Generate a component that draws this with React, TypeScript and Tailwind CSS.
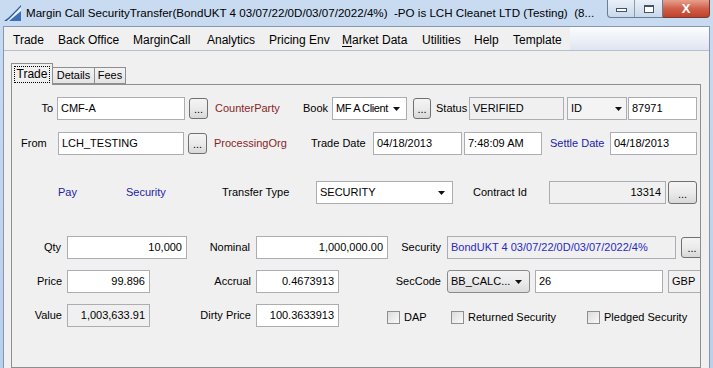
import React from "react";

const font = "font-['Liberation_Sans',Arial,sans-serif]";

function Arrow() {
  return (
    <svg width="7" height="4" viewBox="0 0 7 4" className="shrink-0">
      <path d="M0 0h7L3.5 4z" fill="#111" />
    </svg>
  );
}

function Input({
  className = "",
  children,
  right = false,
  gray = false,
}: {
  className?: string;
  children?: React.ReactNode;
  right?: boolean;
  gray?: boolean;
}) {
  return (
    <div
      className={
        "h-[23px] shrink-0 flex items-center border border-[#abadb3] text-[11px] whitespace-nowrap overflow-hidden " +
        (right ? "justify-end pr-[4px] " : "pl-[3px] ") +
        (gray ? "bg-[#f0f0f0] " : "bg-white ") +
        className
      }
    >
      {children}
    </div>
  );
}

function Dots({ className = "" }: { className?: string }) {
  return (
    <div
      className={
        "shrink-0 flex items-end justify-center pb-[3px] rounded-[3px] border border-[#707070] bg-gradient-to-b from-[#f4f4f4] via-[#ebebeb] to-[#d8d8d8] text-[11px] leading-none " +
        className
      }
    >
      ...
    </div>
  );
}

function Label({ className = "", children }: { className?: string; children: React.ReactNode }) {
  return <div className={"shrink-0 text-[11px] whitespace-nowrap " + className}>{children}</div>;
}

function Check({ className = "", label }: { className?: string; label: string }) {
  return (
    <div className={"shrink-0 flex items-center gap-[4px] text-[11px] " + className}>
      <div className="w-[13px] h-[13px] border border-[#8e8f8f] bg-gradient-to-br from-[#dcdcdc] to-[#fafafa]" />
      <span>{label}</span>
    </div>
  );
}

function TitleBar() {
  return (
    <div className="h-[26px] flex items-start shrink-0">
      <svg width="18" height="18" viewBox="0 0 18 18" className="ml-[4px] mt-[4px] shrink-0">
        <path d="M0 17 C6 13 11 7 17 1 L17 3 C12 8 7 14 3 17 Z" fill="#2a5aa8" />
        <path d="M3 17 C7 14 12 8 17 3 L17 17 Z" fill="#e8f0fa" />
        <path d="M5 17 C9 14 13 10 17 7 L17 17 Z" fill="#3d6fb8" />
      </svg>
      <div className="ml-[4px] mt-[5px] text-[11.6px] leading-[15px] whitespace-pre text-black w-[582px] overflow-hidden">
        {"Margin Call SecurityTransfer(BondUKT 4 03/07/22/0D/03/07/2022/4%)  -PO is LCH Cleanet LTD (Testing)  (8..."}
      </div>
      <div className="ml-auto mr-[3px] flex">
        <div className="flex h-[18px] border border-t-0 border-[#6a7d96] rounded-bl-[4px] bg-gradient-to-b from-[#e9f0f8] to-[#c9d8ea]">
          <div className="w-[27px] flex items-center justify-center border-r border-[#8a9bb2]">
            <div className="w-[11px] h-[4px] mt-[3px] border border-[#44536a] bg-white" />
          </div>
          <div className="w-[27px] flex items-center justify-center">
            <div className="w-[10px] h-[8px] border border-[#44536a] border-t-2 bg-white" />
          </div>
        </div>
        <div className="w-[47px] h-[18px] flex items-center justify-center border border-t-0 border-l-0 border-[#7a3a30] rounded-br-[4px] bg-gradient-to-b from-[#e6a08e] via-[#d0604a] to-[#c0402a]">
          <span className="text-white font-bold text-[13px] leading-none">X</span>
        </div>
      </div>
    </div>
  );
}

const menus: [string, string][] = [
  ["Trade", "w-[45px]"],
  ["Back Office", "w-[75px]"],
  ["MarginCall", "w-[74px]"],
  ["Analytics", "w-[62px]"],
  ["Pricing Env", "w-[73px]"],
  ["Market Data", "w-[80px]"],
  ["Utilities", "w-[52px]"],
  ["Help", "w-[39px]"],
  ["Template", "w-[57px]"],
];

function MenuBar() {
  return (
    <div className="h-[24px] shrink-0 flex border-b border-[#b6bfcc] bg-gradient-to-b from-[#fbfcfe] to-[#dfe6f2]">
      <div className="flex items-center pl-[9px] pt-[2px] bg-[#f0f0f0] text-[12px]">
        {menus.map(([m, w]) => (
          <div key={m} className={"shrink-0 whitespace-nowrap " + w}>
            {m === "Market Data" ? (
              <>
                <span className="underline underline-offset-2">M</span>arket Data
              </>
            ) : (
              m
            )}
          </div>
        ))}
      </div>
    </div>
  );
}

function Tabs() {
  return (
    <div className="mt-[12px] ml-[7px] flex items-end h-[21px] shrink-0">
      <div className="relative z-10 w-[42px] h-[22px] -mb-[1px] border border-b-0 border-[#8e8e8e] bg-[#f0f0f0] flex items-start justify-center pt-[2px]">
        <div className="border border-dotted border-black px-[2px] text-[12px] leading-[15px]">Trade</div>
      </div>
      <div className="w-[42px] h-[17px] border border-l-0 border-[#8e8e8e] bg-gradient-to-b from-[#f2f2f2] to-[#e4e4e4] flex items-center justify-center text-[11px]">
        Details
      </div>
      <div className="w-[31px] h-[17px] border border-l-0 border-[#8e8e8e] bg-gradient-to-b from-[#f2f2f2] to-[#e4e4e4] flex items-center justify-center text-[11px]">
        Fees
      </div>
    </div>
  );
}

function Panel() {
  return (
    <div className="ml-[7px] w-[690px] flex-1 border border-[#8e8e8e] overflow-hidden">
      {/* row 1 */}
      <div className="mt-[12px] flex items-center h-[23px]">
        <Label className="w-[45px] text-right pr-[4px]">To</Label>
        <Input className="w-[128px]">CMF-A</Input>
        <Dots className="ml-[4px] w-[19px] h-[21px]" />
        <Label className="w-[95px] pl-[7px] text-[#8a1f1f]">CounterParty</Label>
        <Label className="w-[29px]">Book</Label>
        <Input className="w-[75px] pr-[6px] justify-between">
          <span className="tracking-[-0.4px]">MF A Client</span>
          <Arrow />
        </Input>
        <Dots className="ml-[6px] w-[18px] h-[21px]" />
        <Label className="w-[38px] pl-[5px]">Status</Label>
        <Input gray className="w-[95px]">VERIFIED</Input>
        <Input className="ml-[3px] w-[60px] pr-[4px] justify-between !bg-[#f4f4f4]">
          <span>ID</span>
          <Arrow />
        </Input>
        <Input className="ml-[1px] w-[69px]">87971</Input>
      </div>
      {/* row 2 */}
      <div className="mt-[12px] flex items-center h-[23px]">
        <Label className="w-[46px] pl-[9px]">From</Label>
        <Input className="w-[126px]">LCH_TESTING</Input>
        <Dots className="ml-[4px] w-[19px] h-[21px]" />
        <Label className="w-[104px] pl-[7px] text-[#8a1f1f]">ProcessingOrg</Label>
        <Label className="w-[62px]">Trade Date</Label>
        <Input className="w-[89px]">04/18/2013</Input>
        <Input className="ml-[2px] w-[78px]">7:48:09 AM</Input>
        <Label className="w-[68px] pl-[8px] text-[#2323a8]">Settle Date</Label>
        <Input className="w-[87px]">04/18/2013</Input>
      </div>
      {/* row 3 */}
      <div className="mt-[26px] flex items-center h-[23px]">
        <Label className="w-[114px] pl-[46px] text-[#2323a8]">Pay</Label>
        <Label className="w-[96px] text-[#2323a8]">Security</Label>
        <Label className="w-[94px]">Transfer Type</Label>
        <Input className="w-[137px] pr-[7px] justify-between">
          <span>SECURITY</span>
          <Arrow />
        </Input>
        <Label className="w-[96px] pl-[20px]">Contract Id</Label>
        <Input gray right className="w-[117px]">13314</Input>
        <Dots className="ml-[2px] w-[29px] h-[23px]" />
      </div>
      {/* row 4 */}
      <div className="mt-[32px] flex items-center h-[23px]">
        <Label className="w-[55px] text-right pr-[6px]">Qty</Label>
        <Input right className="w-[120px]">10,000</Input>
        <Label className="w-[69px] text-right pr-[6px]">Nominal</Label>
        <Input right className="w-[132px]">1,000,000.00</Input>
        <Label className="w-[59px] text-right pr-[6px]">Security</Label>
        <Input gray className="w-[229px] text-[#2a2ac0]">BondUKT 4 03/07/22/0D/03/07/2022/4%</Input>
        <Dots className="ml-[5px] w-[22px] h-[21px]" />
      </div>
      {/* row 5 */}
      <div className="mt-[11px] flex items-center h-[23px]">
        <Label className="w-[55px] text-right pr-[5px]">Price</Label>
        <Input right className="w-[83px]">99.896</Input>
        <Label className="w-[106px] text-right pr-[5px]">Accrual</Label>
        <Input right className="w-[83px]">0.4673913</Input>
        <Label className="w-[108px] text-right pr-[6px]">SecCode</Label>
        <div className="w-[83px] h-[23px] shrink-0 flex items-center justify-between pl-[3px] pr-[7px] rounded-[3px] border border-[#8a8a8a] bg-gradient-to-b from-[#f3f3f3] via-[#ebebeb] to-[#dcdcdc] text-[11px]">
          <span>BB_CALC...</span>
          <Arrow />
        </div>
        <Input className="ml-[5px] w-[128px]">26</Input>
        <Input gray className="ml-[5px] w-[40px]">GBP</Input>
      </div>
      {/* row 6 */}
      <div className="mt-[11px] flex items-center h-[23px]">
        <Label className="w-[55px] text-right pr-[5px]">Value</Label>
        <Input gray right className="w-[83px]">1,003,633.91</Input>
        <Label className="w-[106px] text-right pr-[5px]">Dirty Price</Label>
        <Input right className="w-[83px]">100.3633913</Input>
        <Check className="ml-[48px] w-[64px] mt-[3px]" label="DAP" />
        <Check className="w-[136px] mt-[3px]" label="Returned Security" />
        <Check className="w-[110px] mt-[3px]" label="Pledged Security" />
      </div>
    </div>
  );
}

export default function App() {
  return (
    <div
      className={
        "w-[713px] h-[368px] overflow-hidden flex flex-col text-black bg-gradient-to-b from-[#c8dbf1] to-[#b9d0eb] " +
        font
      }
    >
      <TitleBar />
      <div className="ml-[3px] w-[707px] flex-1 min-h-0 flex flex-col border-l border-t border-r border-[#8596ae] bg-[#f0f0f0]">
        <MenuBar />
        <Tabs />
        <Panel />
      </div>
    </div>
  );
}
